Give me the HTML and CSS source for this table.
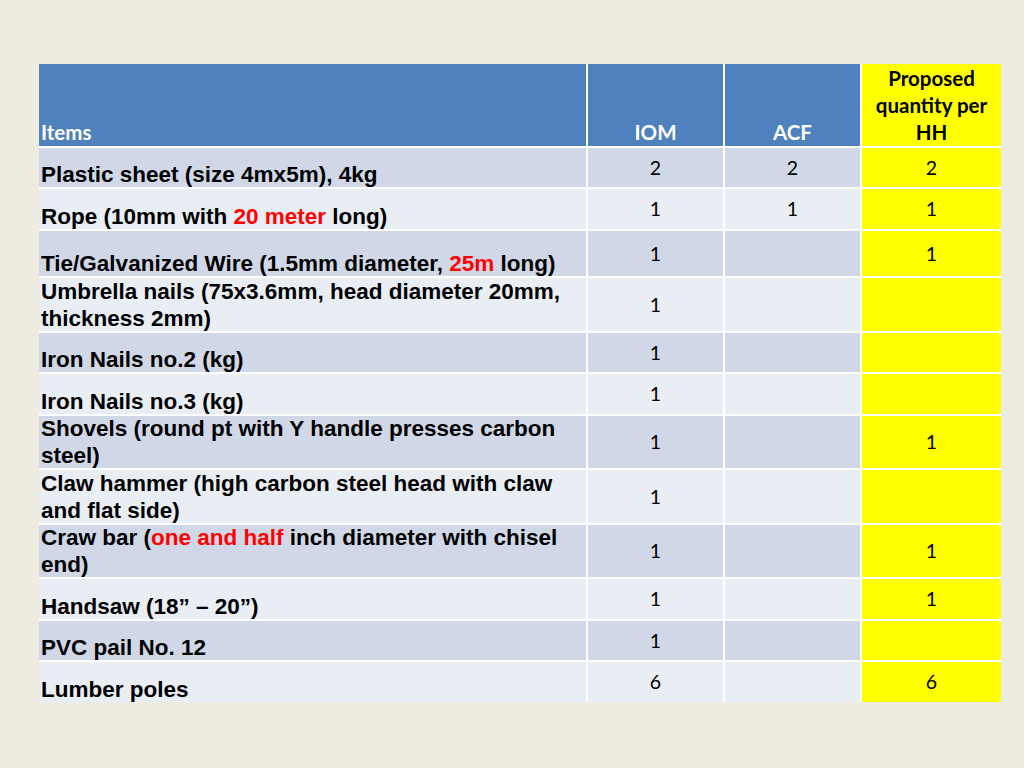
FILE: index.html
```html
<!DOCTYPE html>
<html>
<head>
<meta charset="utf-8">
<link rel="stylesheet" href="styles.css">
</head>
<body>
<table class="grid">
  <colgroup>
    <col class="c-item"><col class="c-num"><col class="c-num"><col class="c-prop">
  </colgroup>
  <thead>
    <tr class="r-head">
      <th class="h-item">Items</th>
      <th class="h-num">IOM</th>
      <th class="h-num">ACF</th>
      <th class="h-prop">Proposed<br>quantity per<br>HH</th>
    </tr>
  </thead>
  <tbody>
    <tr class="odd h41"><td class="item"><div class="t">Plastic sheet (size 4mx5m), 4kg</div></td><td class="num">2</td><td class="num">2</td><td class="prop">2</td></tr>
    <tr class="even h42"><td class="item"><div class="t">Rope (10mm with <span class="red">20 meter</span> long)</div></td><td class="num">1</td><td class="num">1</td><td class="prop">1</td></tr>
    <tr class="odd h47"><td class="item"><div class="t">Tie/Galvanized Wire (1.5mm diameter, <span class="red">25m</span> long)</div></td><td class="num">1</td><td class="num"></td><td class="prop">1</td></tr>
    <tr class="even h55"><td class="item"><div class="t">Umbrella nails (75x3.6mm, head diameter 20mm,<br>thickness 2mm)</div></td><td class="num">1</td><td class="num"></td><td class="prop"></td></tr>
    <tr class="odd h41"><td class="item"><div class="t">Iron Nails no.2 (kg)</div></td><td class="num">1</td><td class="num"></td><td class="prop"></td></tr>
    <tr class="even h42"><td class="item"><div class="t">Iron Nails no.3 (kg)</div></td><td class="num">1</td><td class="num"></td><td class="prop"></td></tr>
    <tr class="odd h54"><td class="item"><div class="t">Shovels (round pt with Y handle presses carbon<br>steel)</div></td><td class="num">1</td><td class="num"></td><td class="prop">1</td></tr>
    <tr class="even h55"><td class="item"><div class="t">Claw hammer (high carbon steel head with claw<br>and flat side)</div></td><td class="num">1</td><td class="num"></td><td class="prop"></td></tr>
    <tr class="odd h54"><td class="item"><div class="t">Craw bar (<span class="red">one and half</span> inch diameter with chisel<br>end)</div></td><td class="num">1</td><td class="num"></td><td class="prop">1</td></tr>
    <tr class="even h42"><td class="item"><div class="t">Handsaw (18” – 20”)</div></td><td class="num">1</td><td class="num"></td><td class="prop">1</td></tr>
    <tr class="odd h41"><td class="item"><div class="t">PVC pail No. 12</div></td><td class="num">1</td><td class="num"></td><td class="prop"></td></tr>
    <tr class="even h41"><td class="item"><div class="t">Lumber poles</div></td><td class="num">6</td><td class="num"></td><td class="prop">6</td></tr>
  </tbody>
</table>
</body>
</html>
```

FILE: styles.css
```css
html, body {
  margin: 0;
  padding: 0;
  background: #EEECE1;
}
body {
  width: 1024px;
  height: 768px;
  overflow: hidden;
}
.grid {
  margin: 64px 0 0 39px;
  width: 962px;
  table-layout: fixed;
  border-collapse: collapse;
  border-style: hidden;
}
.c-item { width: 548px; }
.c-num { width: 137px; }
.c-prop { width: 140px; }

.grid th, .grid td {
  border: 2px solid #ffffff;
  padding: 0;
}
.r-head { height: 83px; }
.r-head th {
  background: #4F81BD;
  color: #ffffff;
  font-family: Lato, "Open Sans", sans-serif;
  font-weight: 700;
  font-size: 20.5px;
  line-height: 27px;
  vertical-align: bottom;
  padding-bottom: 0;
}
.h-item { text-align: left; padding-left: 2px !important; }
.h-num { text-align: center; }
.r-head .h-prop {
  background: #FFFF00;
  color: #000000;
  text-align: center;
}

.h41 { height: 41px; }
.h42 { height: 42px; }
.h47 { height: 47px; }
.h54 { height: 54px; }
.h55 { height: 55px; }

.odd td { background: #D0D8E8; }
.even td { background: #E9EDF4; }
.grid td.prop { background: #FFFF00; }

.item {
  font-family: "Liberation Sans", Arial, sans-serif;
  font-weight: 700;
  font-size: 22.5px;
  line-height: 27.5px;
  color: #000000;
  vertical-align: bottom;
  padding: 0 0 0 2px !important;
  white-space: nowrap;
}
.item .t {
  margin-top: -4px;
  margin-bottom: -1.5px;
}
.red { color: #FF0000; }

.num, .prop {
  font-family: Lato, "Open Sans", sans-serif;
  font-size: 19.5px;
  color: #000000;
  text-align: center;
  vertical-align: middle;
  padding-bottom: 1px !important;
}
```
